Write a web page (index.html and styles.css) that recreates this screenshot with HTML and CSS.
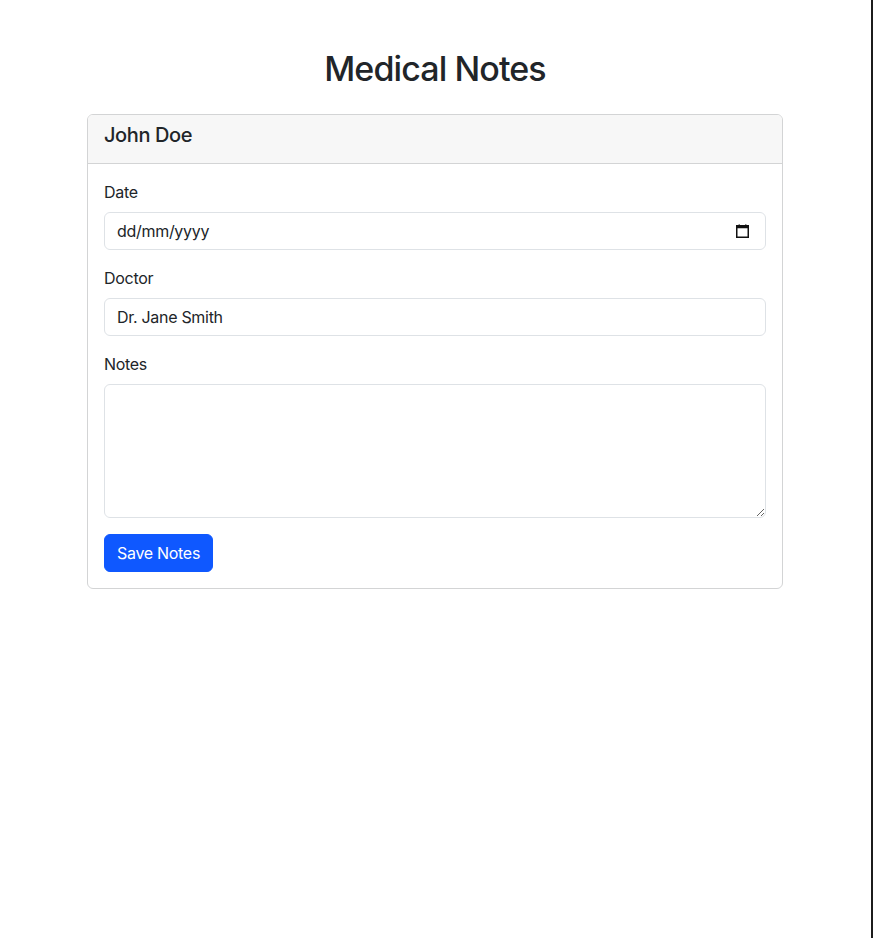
FILE: index.html
```html
<!DOCTYPE html>
<html lang="en">
<head>
<meta charset="utf-8">
<title>Medical Notes</title>
<link rel="stylesheet" href="styles.css">
</head>
<body>
<div class="container">
  <h1 class="page-title">Medical Notes</h1>
  <div class="card">
    <div class="card-header">
      <h5 class="card-title">John Doe</h5>
    </div>
    <div class="card-body">
      <form class="notes-form">
        <div class="field">
          <label class="form-label" for="date">Date</label>
          <div class="form-control date-control">
            <input id="date" class="date-input" type="text" placeholder="dd/mm/yyyy">
            <svg class="cal-icon" width="13" height="14" viewBox="0 0 13 14" aria-hidden="true">
              <rect x="2.5" y="0.5" width="1.5" height="2" fill="#111"/>
              <rect x="9" y="0.5" width="1.5" height="2" fill="#111"/>
              <rect x="0.75" y="1.75" width="11.5" height="11.5" fill="none" stroke="#111" stroke-width="1.5"/>
              <rect x="0.75" y="1.75" width="11.5" height="2.5" fill="#111"/>
            </svg>
          </div>
        </div>
        <div class="field">
          <label class="form-label" for="doctor">Doctor</label>
          <input id="doctor" class="form-control" type="text" value="Dr. Jane Smith">
        </div>
        <div class="field">
          <label class="form-label" for="notes">Notes</label>
          <textarea id="notes" class="form-control textarea" rows="5"></textarea>
        </div>
        <button type="button" class="btn-primary">Save Notes</button>
      </form>
    </div>
  </div>
</div>
</body>
</html>
```

FILE: styles.css
```css
* { box-sizing: border-box; }

html {
  border-right: 2px solid #1c1c1c;
  min-height: 100vh;
}

body {
  margin: 0;
  font-family: Inter, "Noto Sans", "Liberation Sans", sans-serif;
  font-size: 16px;
  line-height: 1.5;
  letter-spacing: -0.3px;
  color: #212529;
  background: #fff;
}

.container {
  max-width: 721px;
  margin: 48px auto 0;
  padding: 0 13px 0 12px;
}

.page-title {
  margin: 0 0 24px;
  text-align: center;
  font-size: 34px;
  font-weight: 500;
  line-height: 42px;
  letter-spacing: -0.9px;
}

.card {
  border: 1px solid #d3d4d5;
  border-radius: 6px;
  background: #fff;
  overflow: hidden;
}

.card-header {
  padding: 8px 16px;
  background: #f7f7f7;
  border-bottom: 1px solid #d3d4d5;
}

.card-title {
  margin: 0 0 8px;
  font-size: 20px;
  font-weight: 500;
  line-height: 1.2;
  letter-spacing: -0.4px;
}

.card-body {
  padding: 16px;
}

.field {
  margin-bottom: 16px;
}

.form-label {
  display: inline-block;
  margin-bottom: 8px;
}

.form-control {
  display: block;
  width: 100%;
  padding: 6px 12px;
  font-family: inherit;
  font-size: 16px;
  line-height: 1.5;
  letter-spacing: -0.3px;
  color: #212529;
  background: #fff;
  border: 1px solid #dee2e6;
  border-radius: 6px;
  outline: none;
}

.date-control {
  display: flex;
  align-items: center;
  gap: 8px;
}

.date-input {
  flex: 1;
  min-width: 0;
  border: 0;
  padding: 0;
  font: inherit;
  letter-spacing: -0.3px;
  color: #212529;
  outline: none;
  background: transparent;
}

.date-input::placeholder {
  color: #212529;
  opacity: 1;
}

.cal-icon {
  flex: none;
  margin-right: 4px;
}

.textarea {
  resize: vertical;
}

.btn-primary {
  display: inline-block;
  padding: 6px 12px;
  font-family: inherit;
  font-size: 16px;
  line-height: 1.5;
  letter-spacing: -0.3px;
  color: #fff;
  background: #0f58ff;
  border: 1px solid #0f58ff;
  border-radius: 6px;
  cursor: pointer;
}
```
